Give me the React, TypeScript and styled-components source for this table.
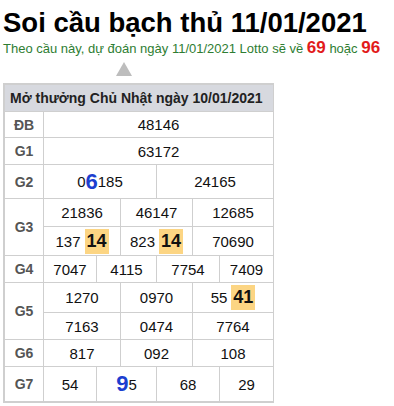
import styled, { createGlobalStyle } from "styled-components";

const GlobalStyle = createGlobalStyle`
  body {
    margin: 0;
    font-family: "Liberation Sans", Arial, sans-serif;
    background: #ffffff;
    color: #111;
  }
`;

type Part = { text: string; kind?: "big" | "hot" };
type Cell = { span: number; parts: Part[] };
type Prize = { label: string; rows: Cell[][] };

const n = (text: string, span: number): Cell => ({ span, parts: [{ text }] });

const prizes: Prize[] = [
  { label: "ĐB", rows: [[n("48146", 12)]] },
  { label: "G1", rows: [[n("63172", 12)]] },
  {
    label: "G2",
    rows: [
      [
        { span: 6, parts: [{ text: "0" }, { text: "6", kind: "big" }, { text: "185" }] },
        n("24165", 6),
      ],
    ],
  },
  {
    label: "G3",
    rows: [
      [n("21836", 4), n("46147", 4), n("12685", 4)],
      [
        { span: 4, parts: [{ text: "137" }, { text: "14", kind: "hot" }] },
        { span: 4, parts: [{ text: "823" }, { text: "14", kind: "hot" }] },
        n("70690", 4),
      ],
    ],
  },
  { label: "G4", rows: [[n("7047", 3), n("4115", 3), n("7754", 3), n("7409", 3)]] },
  {
    label: "G5",
    rows: [
      [
        n("1270", 4),
        n("0970", 4),
        { span: 4, parts: [{ text: "55" }, { text: "41", kind: "hot" }] },
      ],
      [n("7163", 4), n("0474", 4), n("7764", 4)],
    ],
  },
  { label: "G6", rows: [[n("817", 4), n("092", 4), n("108", 4)]] },
  {
    label: "G7",
    rows: [
      [
        n("54", 3),
        { span: 3, parts: [{ text: "9", kind: "big" }, { text: "5" }] },
        n("68", 3),
        n("29", 3),
      ],
    ],
  },
];

function App() {
  return (
    <Page>
      <GlobalStyle />
      <Title>Soi cầu bạch thủ 11/01/2021</Title>
      <Lead>
        Theo cầu này, dự đoán ngày 11/01/2021 Lotto sẽ về <Pick>69</Pick> hoặc <Pick>96</Pick>
      </Lead>
      <Arrow />
      <Board>
        <Heading>Mở thưởng Chủ Nhật ngày 10/01/2021</Heading>
        {prizes.map((prize) => (
          <>
            <Label key={prize.label} rows={prize.rows.length}>
              {prize.label}
            </Label>
            {prize.rows.map((row) =>
              row.map((cell, i) => (
                <Num key={prize.label + i} span={cell.span}>
                  {cell.parts.map((p, j) =>
                    p.kind === "big" ? (
                      <Big key={j}>{p.text}</Big>
                    ) : p.kind === "hot" ? (
                      <Hot key={j}>{p.text}</Hot>
                    ) : (
                      <span key={j}>{p.text}</span>
                    )
                  )}
                </Num>
              ))
            )}
          </>
        ))}
      </Board>
    </Page>
  );
}

const Page = styled.div`
  padding: 6px 0 0 3px;
`;

const Title = styled.h1`
  margin: 0;
  font-size: 27.5px;
  line-height: 34px;
  font-weight: bold;
  color: #000;
`;

const Lead = styled.div`
  font-size: 13px;
  line-height: 16px;
  color: #2e7d32;
`;

const Pick = styled.b`
  font-size: 17px;
  color: #e21b1b;
`;

const Arrow = styled.div`
  width: 0;
  height: 0;
  margin: 5px 0 7px 113px;
  border-left: 8px solid transparent;
  border-right: 8px solid transparent;
  border-bottom: 14px solid #bdbdbd;
`;

const Board = styled.div`
  display: grid;
  width: 271px;
  box-sizing: border-box;
  grid-template-columns: 39px 18px 18px 17px 24px 18px 18px 18px 18px 27px 18px 18px 18px;
  grid-template-rows: 27px 26px 27px 34px 28px 29px 27px 30px 27px 27px 35px;
  grid-auto-flow: row dense;
  border-left: 2px solid #cfcfcf;
  border-top: 2px solid #cfcfcf;
  border-right: 1px solid #cfcfcf;
  border-bottom: 1px solid #cfcfcf;
`;

const Heading = styled.div`
  grid-column: 1 / -1;
  background: #d7d9df;
  border-right: 1px solid #cfcfcf;
  border-bottom: 1px solid #cfcfcf;
  font-size: 14px;
  font-weight: bold;
  color: #222;
  display: flex;
  align-items: center;
  padding-left: 5px;
`;

const Label = styled.div<{ rows: number }>`
  grid-column: 1;
  grid-row: span ${(p) => p.rows};
  border-right: 1px solid #cfcfcf;
  border-bottom: 1px solid #cfcfcf;
  display: flex;
  align-items: center;
  justify-content: center;
  font-size: 14px;
  font-weight: bold;
  color: #555;
`;

const Num = styled.div<{ span: number }>`
  grid-column: span ${(p) => p.span};
  border-right: 1px solid #cfcfcf;
  border-bottom: 1px solid #cfcfcf;
  display: flex;
  align-items: center;
  justify-content: center;
  font-size: 15px;
  color: #111;
  white-space: nowrap;
`;

const Big = styled.b`
  font-size: 22px;
  color: #1c3fd0;
`;

const Hot = styled.b`
  margin-left: 4px;
  padding: 2px 2px;
  background: #fcd583;
  font-size: 18px;
  color: #111;
`;

export default App;
